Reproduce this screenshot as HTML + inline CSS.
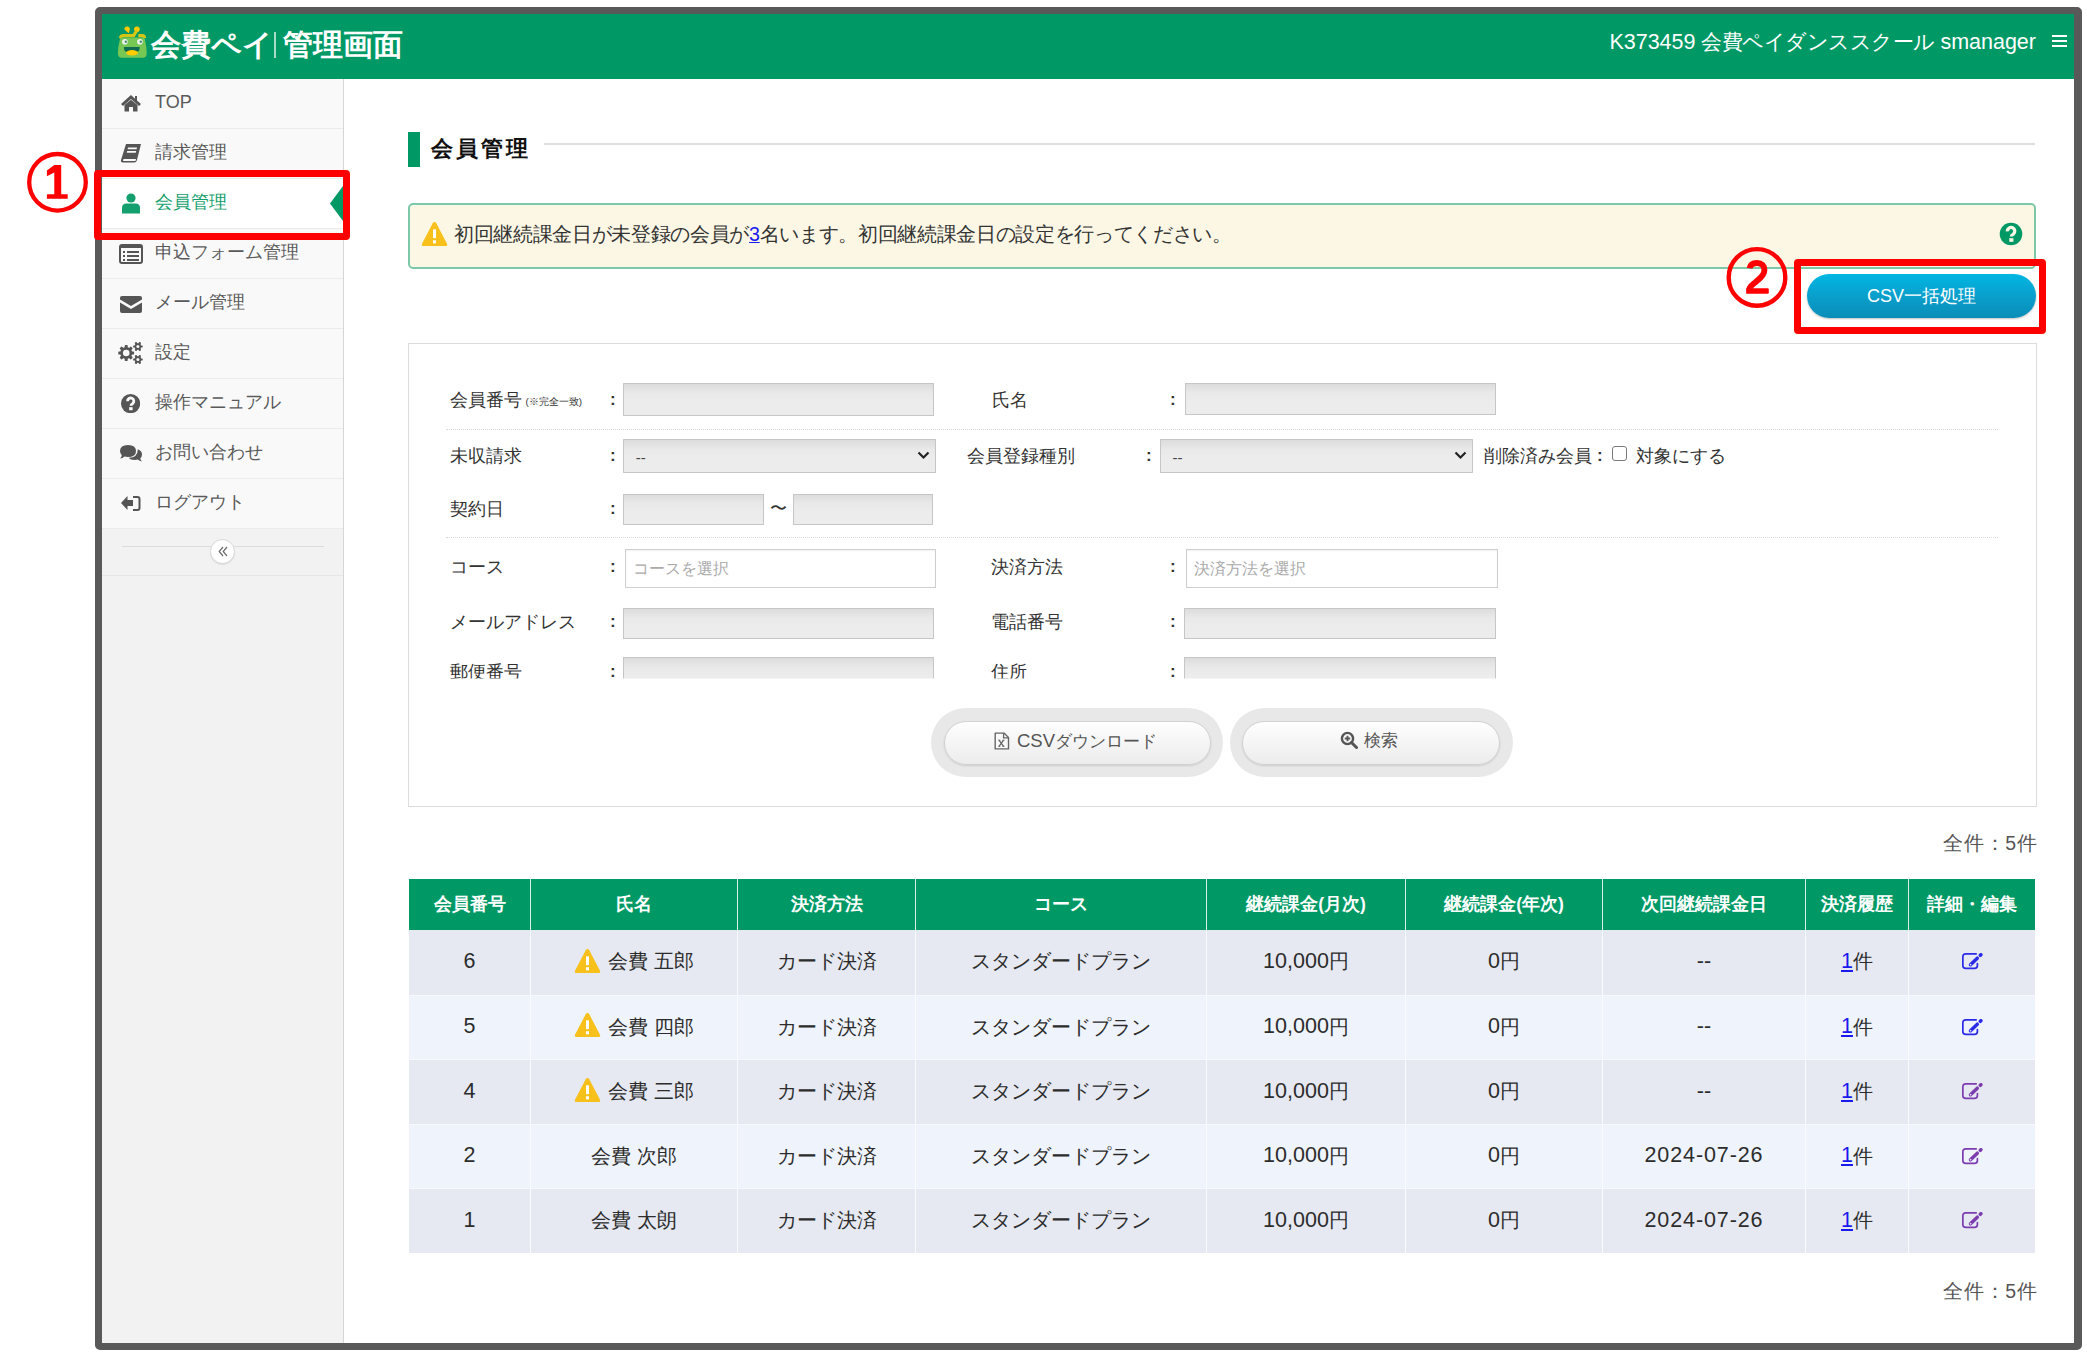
<!DOCTYPE html>
<html><head><meta charset="utf-8">
<style>
*{box-sizing:border-box;margin:0;padding:0}
html,body{width:2087px;height:1362px;overflow:hidden;background:#fff}
body{font-family:"Liberation Sans",sans-serif;color:#333;position:relative}
.a{position:absolute}
.frame{left:95px;top:7px;width:1987px;height:1343px;border:7px solid #595959;border-right-width:8px;border-radius:5px;overflow:hidden;background:#fff}
.hdr{left:0;top:0;width:1973px;height:65.4px;background:#009966}
.side{left:0;top:65px;width:242px;height:1270px;background:#f2f2f2;border-right:1px solid #d6d6d6}
.item{left:0;width:241px;height:50px;background:#f9f9f9;border-bottom:1px solid #ebebeb}
.item .t{position:absolute;left:53px;top:11px;font-size:18px;color:#5a5a5a;white-space:nowrap;line-height:24px}
.item svg{position:absolute}

.inp{position:absolute;height:33px;background:linear-gradient(#dcdcdc,#e9e9e9 30%,#ececec 60%);border:1px solid #c6c6c6}
.lbl{position:absolute;font-size:17.5px;color:#333;white-space:nowrap;line-height:22px}
.col{position:absolute;font-size:17px;color:#333;line-height:22px}
.sel .v{position:absolute;left:12px;top:8px;font-size:15px;color:#444;line-height:20px}
.sel svg{position:absolute;right:5px;top:11px}
.pill-o{position:absolute;height:69px;border-radius:35px;background:#e8e8e8}
.pill-i{position:absolute;left:13px;top:13px;height:44px;border-radius:22px;background:linear-gradient(#fefefe,#ececec);border:1px solid #d2d2d2;box-shadow:0 1px 2px rgba(0,0,0,.12);font-size:17px;color:#555;text-align:center;line-height:38px;white-space:nowrap;padding-right:4px}
.tbl{position:absolute;left:306px;top:865px;width:1627px}
.th{position:absolute;top:0;height:51px;background:#009966;color:#fff;font-weight:bold;font-size:17.5px;text-align:center;line-height:51px;white-space:nowrap;border-right:1px solid #d8efe5}
.td{position:absolute;height:65px;text-align:center;line-height:63px;font-size:19.5px;color:#2c2c2c;white-space:nowrap;border-right:1px solid #fafbfd;border-top:1px solid #f6f8fc}
.r1{background:#e6e9f1}.r2{background:#eff3fb}
.lnk{color:#1a1aee;text-decoration:underline}
.n{font-size:21.5px;position:relative;top:-0.5px}
</style></head><body>
<div class="a frame">
  <div class="a hdr">
    <svg class="a" style="left:8px;top:6px" width="50" height="45" viewBox="0 0 50 45">
      <path d="M14.3 9.3 A2.8 2.8 0 1 1 19.6 10.5 L18.6 13.2 Z" fill="#ffcc00"/>
      <circle cx="26.9" cy="9.3" r="2.8" fill="#ffcc00"/>
      <path d="M10.6 18.2 Q10.6 15.6 13.6 15.6 L23.6 15.6 L26.8 10.5" stroke="#d6c614" stroke-width="3.2" fill="none"/>
      <path d="M28.3 15.6 L32 15.6 Q34.5 15.6 34.5 18" stroke="#d6c614" stroke-width="3.2" fill="none"/>
      <path d="M11.5 17.5 L33.5 17.5 Q34.8 17.5 35 20 Q36.7 27 36.7 33 Q36.7 37.8 33 37.8 L11.5 37.8 Q7.9 37.8 7.9 33 Q7.9 27 9.8 20 Q10.2 17.5 11.5 17.5Z" fill="#76c754"/>
      <circle cx="14.9" cy="21.7" r="2.8" fill="#eef5ee"/><circle cx="15.8" cy="21.7" r="1.2" fill="#4a8a7a"/>
      <circle cx="29.9" cy="21.7" r="2.8" fill="#eef5ee"/><circle cx="30.8" cy="21.7" r="1.2" fill="#4a8a7a"/>
      <path d="M13.9 27.1 L29.7 27.1 Q29.7 31.5 27 32 L16.6 32 Q13.9 31.5 13.9 27.1Z" fill="#0d6b52"/>
      <ellipse cx="22.1" cy="32.8" rx="6" ry="2.7" fill="#ffcc00"/>
    </svg>
    <div class="a" style="left:49px;top:13px;font-size:29.5px;font-weight:bold;color:#fff;white-space:nowrap;line-height:36px">会費ペイ<span style="display:inline-block;width:2px;height:26px;background:#a9dcc6;margin:0 7px 0 1px;vertical-align:-3px"></span>管理画面</div>
    <div class="a" style="right:39px;top:12.5px;font-size:21.5px;color:#fff;white-space:nowrap;line-height:30px">K373459 <span style="font-size:20.9px;letter-spacing:-0.55px">会費ペイダンススクール</span> smanager</div>
    <div class="a" style="left:1949.5px;top:20.5px;width:15px;height:13px">
      <div class="a" style="left:0;top:0;width:15px;height:2px;background:#fff"></div>
      <div class="a" style="left:0;top:5px;width:15px;height:2px;background:#fff"></div>
      <div class="a" style="left:0;top:10px;width:15px;height:2px;background:#fff"></div>
    </div>
  </div>

  <div class="a side">
    <div class="a item" style="top:0"><svg style="left:18px;top:15px" width="22" height="18" viewBox="0 0 22 18"><path d="M11 1 L1 10 L3 12 L11 5 L19 12 L21 10 L17 6.5 L17 2 L15 2 L15 4.8Z" fill="#555"/><path d="M4.5 11 L11 5.8 L17.5 11 L17.5 17.5 L13 17.5 L13 13 L9 13 L9 17.5 L4.5 17.5Z" fill="#555"/></svg><div class="t" style="font-size:18px">TOP</div></div>
    <div class="a item" style="top:50px"><svg style="left:18px;top:14px" width="22" height="21" viewBox="0 0 22 21"><path d="M6 1 L21 1 L17 17 Q16.5 19.5 14 19.5 L3 19.5 Q0.5 19.5 1 17 Z" fill="#555"/><path d="M3.5 16 L16 16 L15.5 18 L3 18Z" fill="#f9f9f9"/><path d="M8 4.5 L17 4.5 L16.6 6.3 L7.6 6.3Z M7.2 8 L16.2 8 L15.8 9.8 L6.8 9.8Z" fill="#f9f9f9"/></svg><div class="t">請求管理</div></div>
    <div class="a item" style="top:100px;background:#fff"><svg style="left:19px;top:14px" width="20" height="21" viewBox="0 0 20 21"><circle cx="10" cy="5" r="4.6" fill="#14a06e"/><path d="M1 20.5 L1 15 Q1 10.5 5.5 10.5 L14.5 10.5 Q19 10.5 19 15 L19 20.5Z" fill="#14a06e"/></svg><div class="t" style="color:#14a06e">会員管理</div>
      <svg style="left:228px;top:7px" width="13" height="35" viewBox="0 0 13 35"><path d="M13 0 L0 17.5 L13 35Z" fill="#009966"/></svg></div>
    <div class="a item" style="top:150px"><svg style="left:17px;top:15px" width="24" height="20" viewBox="0 0 24 20"><rect x="1" y="1" width="22" height="18" rx="2" fill="none" stroke="#555" stroke-width="2"/><rect x="1" y="1" width="22" height="3" fill="#555"/><rect x="4" y="7" width="2" height="2" fill="#555"/><rect x="8" y="7" width="12" height="2" fill="#555"/><rect x="4" y="11" width="2" height="2" fill="#555"/><rect x="8" y="11" width="12" height="2" fill="#555"/><rect x="4" y="15" width="2" height="2" fill="#555"/><rect x="8" y="15" width="12" height="2" fill="#555"/></svg><div class="t">申込フォーム管理</div></div>
    <div class="a item" style="top:200px"><svg style="left:17px;top:16px" width="24" height="19" viewBox="0 0 24 19"><path d="M1 3 Q1 1 3 1 L21 1 Q23 1 23 3 L23 4.5 L12 11 L1 4.5Z" fill="#555"/><path d="M1 7.5 L12 14 L23 7.5 L23 16 Q23 18 21 18 L3 18 Q1 18 1 16Z" fill="#555"/></svg><div class="t">メール管理</div></div>
    <div class="a item" style="top:250px"><svg style="left:10px;top:7px" width="40" height="34" viewBox="0 0 40 34"><circle cx="14.2" cy="17" r="6.0" fill="#555"/><rect x="12.7" y="9.1" width="3.0" height="7.9" rx="0.6" fill="#555" transform="rotate(0.0 14.2 17)"/><rect x="12.7" y="9.1" width="3.0" height="7.9" rx="0.6" fill="#555" transform="rotate(45.0 14.2 17)"/><rect x="12.7" y="9.1" width="3.0" height="7.9" rx="0.6" fill="#555" transform="rotate(90.0 14.2 17)"/><rect x="12.7" y="9.1" width="3.0" height="7.9" rx="0.6" fill="#555" transform="rotate(135.0 14.2 17)"/><rect x="12.7" y="9.1" width="3.0" height="7.9" rx="0.6" fill="#555" transform="rotate(180.0 14.2 17)"/><rect x="12.7" y="9.1" width="3.0" height="7.9" rx="0.6" fill="#555" transform="rotate(225.0 14.2 17)"/><rect x="12.7" y="9.1" width="3.0" height="7.9" rx="0.6" fill="#555" transform="rotate(270.0 14.2 17)"/><rect x="12.7" y="9.1" width="3.0" height="7.9" rx="0.6" fill="#555" transform="rotate(315.0 14.2 17)"/><circle cx="14.2" cy="17" r="3.3" fill="#f9f9f9"/><circle cx="25.9" cy="10.5" r="3.2" fill="#555"/><rect x="24.849999999999998" y="5.7" width="2.1" height="4.8" rx="0.6" fill="#555" transform="rotate(30.0 25.9 10.5)"/><rect x="24.849999999999998" y="5.7" width="2.1" height="4.8" rx="0.6" fill="#555" transform="rotate(90.0 25.9 10.5)"/><rect x="24.849999999999998" y="5.7" width="2.1" height="4.8" rx="0.6" fill="#555" transform="rotate(150.0 25.9 10.5)"/><rect x="24.849999999999998" y="5.7" width="2.1" height="4.8" rx="0.6" fill="#555" transform="rotate(210.0 25.9 10.5)"/><rect x="24.849999999999998" y="5.7" width="2.1" height="4.8" rx="0.6" fill="#555" transform="rotate(270.0 25.9 10.5)"/><rect x="24.849999999999998" y="5.7" width="2.1" height="4.8" rx="0.6" fill="#555" transform="rotate(330.0 25.9 10.5)"/><circle cx="25.9" cy="10.5" r="1.5" fill="#f9f9f9"/><circle cx="25.9" cy="23.5" r="3.2" fill="#555"/><rect x="24.849999999999998" y="18.7" width="2.1" height="4.8" rx="0.6" fill="#555" transform="rotate(30.0 25.9 23.5)"/><rect x="24.849999999999998" y="18.7" width="2.1" height="4.8" rx="0.6" fill="#555" transform="rotate(90.0 25.9 23.5)"/><rect x="24.849999999999998" y="18.7" width="2.1" height="4.8" rx="0.6" fill="#555" transform="rotate(150.0 25.9 23.5)"/><rect x="24.849999999999998" y="18.7" width="2.1" height="4.8" rx="0.6" fill="#555" transform="rotate(210.0 25.9 23.5)"/><rect x="24.849999999999998" y="18.7" width="2.1" height="4.8" rx="0.6" fill="#555" transform="rotate(270.0 25.9 23.5)"/><rect x="24.849999999999998" y="18.7" width="2.1" height="4.8" rx="0.6" fill="#555" transform="rotate(330.0 25.9 23.5)"/><circle cx="25.9" cy="23.5" r="1.5" fill="#f9f9f9"/></svg><div class="t">設定</div></div>
    <div class="a item" style="top:300px"><svg style="left:18.7px;top:14.9px" width="19.2" height="19.2" viewBox="0.7 0.7 22.6 22.6"><circle cx="12" cy="12" r="11.3" fill="#555"/><path d="M8.4 9.3 A3.7 3.7 0 1 1 14.3 12.1 Q12.4 13.1 12.4 14.6" fill="none" stroke="#f9f9f9" stroke-width="3.3"/><rect x="10.3" y="16.2" width="4.1" height="3.6" fill="#f9f9f9"/></svg><div class="t">操作マニュアル</div></div>
    <div class="a item" style="top:350px"><svg style="left:17px;top:15px" width="24" height="20" viewBox="0 0 24 20"><path d="M9 1 Q17 1 17 7 Q17 13 9 13 Q7 13 5.5 12.6 Q3.5 14.6 1 14.6 Q2.6 13 2.8 11.3 Q1 9.6 1 7 Q1 1 9 1Z" fill="#555"/><path d="M18.8 5.2 Q23 6.8 23 10.4 Q23 12.7 21.3 14.3 Q21.5 16 23 17.4 Q20.6 17.4 18.7 15.6 Q17.4 16 16 16 Q11.2 16 9.8 13.8 Q18.8 13.6 18.8 5.2Z" fill="#555"/></svg><div class="t">お問い合わせ</div></div>
    <div class="a item" style="top:400px"><svg style="left:18px;top:15px" width="22" height="19" viewBox="0 0 22 19"><path d="M1 9 L7.5 2 L7.5 6 L13 6 L13 12 L7.5 12 L7.5 16Z" fill="#555"/><path d="M13 2 L17.5 2 Q20.5 2 20.5 5 L20.5 14 Q20.5 17 17.5 17 L13 17 L13 15 L17.5 15 Q18.5 15 18.5 14 L18.5 5 Q18.5 4 17.5 4 L13 4Z" fill="#555"/></svg><div class="t">ログアウト</div></div>
    <div class="a" style="left:0;top:450px;width:241px;height:47px;background:#f2f2f2;border-bottom:1px solid #e6e6e6">
      <div class="a" style="left:20px;top:17px;width:202px;height:1px;background:#dcdcdc"></div>
      <div class="a" style="left:108px;top:10px;width:25px;height:25px;border-radius:50%;background:#fff;border:1px solid #d8d8d8;box-shadow:0 1px 1px rgba(0,0,0,.08)"><svg class="a" style="left:7px;top:6px" width="10" height="11" viewBox="0 0 10 11"><path d="M5 1 L1.2 5.5 L5 10 M9 1 L5.2 5.5 L9 10" fill="none" stroke="#6a6a6a" stroke-width="1.2"/></svg></div>
    </div>
  </div>

  <!-- main -->
  <div class="a" style="left:306px;top:118px;width:12px;height:35px;background:#009966"></div>
  <div class="a" style="left:329px;top:120px;font-size:22px;font-weight:bold;letter-spacing:3px;color:#111;line-height:30px;white-space:nowrap">会員管理</div>
  <div class="a" style="left:442px;top:129px;width:1491px;height:2px;background:#dedede"></div>

  <div class="a" style="left:305.5px;top:188.5px;width:1628.5px;height:66px;background:#fcf7e5;border:2px solid #7cc9a9;border-radius:5px"></div>
  <svg class="a" style="left:319px;top:206.5px" width="27" height="26" viewBox="0 0 27 25" preserveAspectRatio="none"><path d="M13.5 1 Q14.6 1 15.3 2.2 L26 21.8 Q26.8 24 24.5 24 L2.5 24 Q0.2 24 1 21.8 L11.7 2.2 Q12.4 1 13.5 1Z" fill="#f7c01b"/><rect x="12" y="8" width="3" height="8.5" fill="#fff"/><rect x="12" y="18.5" width="3" height="3" fill="#fff"/></svg>
  <div class="a" style="left:352px;top:207px;font-size:19.7px;letter-spacing:-0.33px;color:#333;line-height:27px;white-space:nowrap">初回継続課金日が未登録の会員が<span class="lnk">3</span>名います。初回継続課金日の設定を行ってください。</div>
  <svg class="a" style="left:1897.2px;top:208.2px" width="24" height="24" viewBox="0 0 24 24"><circle cx="12" cy="12" r="11.3" fill="#009966"/><path d="M8.4 9.3 A3.7 3.7 0 1 1 14.3 12.1 Q12.4 13.1 12.4 14.6" fill="none" stroke="#fdf8e6" stroke-width="3.3"/><rect x="10.3" y="16.2" width="4.1" height="3.6" fill="#fdf8e6"/></svg>

  <div class="a" style="left:1705px;top:260px;width:229px;height:44px;border-radius:22px;background:linear-gradient(#00b7e3,#0a9fcc 50%,#0a8db8);box-shadow:0 1px 2px rgba(0,0,0,.25);color:#fff;font-size:18px;text-align:center;line-height:44px;white-space:nowrap">CSV一括処理</div>

  <!-- form panel -->
  <div class="a" style="left:306px;top:329px;width:1629px;height:464px;border:1px solid #dcdcdc;background:#fff"></div>
  <div class="a" style="left:0;top:0;width:1973px;height:1329px;clip-path:inset(330px 0 664.5px 0)">
<div class="lbl" style="left:347.6px;top:374.7px;font-size:17.5px">会員番号<span style="font-size:9.8px;margin-left:4px;vertical-align:1px">(※完全一致)</span></div>
<div class="lbl" style="left:508px;top:375px;font-size:17px;font-weight:bold">:</div>
<div class="inp" style="left:520.7px;top:369px;width:311.3px;height:33px;"></div>
<div class="lbl" style="left:889.7px;top:374.7px;font-size:17.5px">氏名</div>
<div class="lbl" style="left:1068px;top:375px;font-size:17px;font-weight:bold">:</div>
<div class="inp" style="left:1082.5px;top:369px;width:311.3px;height:32px;"></div>
<div class="a" style="left:343.6px;top:415px;width:1552px;height:0;border-top:1px dotted #dadada"></div>
<div class="lbl" style="left:347.6px;top:430.7px;font-size:17.5px">未収請求</div>
<div class="lbl" style="left:508px;top:431px;font-size:17px;font-weight:bold">:</div>
<div class="inp sel" style="left:520.7px;top:424.7px;width:313px;height:34px"><div class="v">--</div><svg width="13" height="9" viewBox="0 0 13 9"><path d="M1.5 1.5 L6.5 6.5 L11.5 1.5" stroke="#222" stroke-width="2.2" fill="none"/></svg></div>
<div class="lbl" style="left:864.8px;top:430.7px;font-size:17.5px">会員登録種別</div>
<div class="lbl" style="left:1044px;top:431px;font-size:17px;font-weight:bold">:</div>
<div class="inp sel" style="left:1057.6px;top:424.5px;width:313px;height:34px"><div class="v">--</div><svg width="13" height="9" viewBox="0 0 13 9"><path d="M1.5 1.5 L6.5 6.5 L11.5 1.5" stroke="#222" stroke-width="2.2" fill="none"/></svg></div>
<div class="lbl" style="left:1382.3px;top:430.7px;font-size:17.5px">削除済み会員</div><div class="lbl" style="left:1495px;top:431px;font-size:17px;font-weight:bold">:</div><div class="a" style="left:1510px;top:432px;width:15px;height:15px;border:1.5px solid #7a7a7a;border-radius:3px;background:#fff"></div><div class="lbl" style="left:1534px;top:430.7px;font-size:17.5px">対象にする</div>
<div class="lbl" style="left:347.6px;top:484px;font-size:17.5px">契約日</div>
<div class="lbl" style="left:508px;top:484px;font-size:17px;font-weight:bold">:</div>
<div class="inp" style="left:520.7px;top:479.7px;width:141px;height:31.6px;"></div>
<div class="lbl" style="left:668px;top:484px;font-size:17px">〜</div>
<div class="inp" style="left:691px;top:479.7px;width:140px;height:31.6px;"></div>
<div class="a" style="left:343.6px;top:523px;width:1552px;height:0;border-top:1px dotted #dadada"></div>
<div class="lbl" style="left:347.6px;top:542px;font-size:17.5px">コース</div>
<div class="lbl" style="left:508px;top:542px;font-size:17px;font-weight:bold">:</div>
<div class="inp" style="left:523.4px;top:535px;width:311px;height:39.4px;background:#fff;border-color:#cfcfcf;box-shadow:inset 0 1px 2px rgba(0,0,0,.06)"><div class="a" style="left:7px;top:8px;font-size:16px;color:#aaa;line-height:22px;white-space:nowrap;font-family:'Liberation Serif',serif">コースを選択</div></div>
<div class="lbl" style="left:889.2px;top:541.7px;font-size:17.5px">決済方法</div>
<div class="lbl" style="left:1068px;top:542px;font-size:17px;font-weight:bold">:</div>
<div class="inp" style="left:1083.8px;top:535.3px;width:312.6px;height:39.1px;background:#fff;border-color:#cfcfcf;box-shadow:inset 0 1px 2px rgba(0,0,0,.06)"><div class="a" style="left:7px;top:8px;font-size:16px;color:#aaa;line-height:22px;white-space:nowrap;font-family:'Liberation Serif',serif">決済方法を選択</div></div>
<div class="lbl" style="left:347.6px;top:597px;font-size:17.5px">メールアドレス</div>
<div class="lbl" style="left:508px;top:597px;font-size:17px;font-weight:bold">:</div>
<div class="inp" style="left:520.7px;top:593.7px;width:311.3px;height:31.7px;"></div>
<div class="lbl" style="left:889.2px;top:597.4px;font-size:17.5px">電話番号</div>
<div class="lbl" style="left:1068px;top:597px;font-size:17px;font-weight:bold">:</div>
<div class="inp" style="left:1082.4px;top:593.6px;width:311.4px;height:31.7px;"></div>
<div class="lbl" style="left:347.6px;top:646.5px;font-size:17.5px">郵便番号</div>
<div class="lbl" style="left:508px;top:647px;font-size:17px;font-weight:bold">:</div>
<div class="inp" style="left:520.7px;top:642.8px;width:311.3px;height:33px;"></div>
<div class="lbl" style="left:889.2px;top:646.5px;font-size:17.5px">住所</div>
<div class="lbl" style="left:1068px;top:647px;font-size:17px;font-weight:bold">:</div>
<div class="inp" style="left:1082.4px;top:642.5px;width:311.4px;height:33px;"></div>
  </div>
<div class="pill-o" style="left:829px;top:693.5px;width:292.4px"><div class="pill-i" style="width:267px"><svg width="16" height="18" viewBox="0 0 16 18" style="vertical-align:-3px;margin-right:7px"><path d="M1.2 1.1 L10 1.1 L14.5 5.6 L14.5 16.9 L1.2 16.9Z" fill="#fafafa" stroke="#666" stroke-width="1.4" stroke-linejoin="round"/><path d="M9.6 1.1 L9.6 5.9 L14.5 5.9" fill="none" stroke="#666" stroke-width="1.3"/><path d="M5 8.2 L9.6 14.4 M9.6 8.2 L5 14.4" stroke="#666" stroke-width="1.3"/><path d="M4.2 8.2 L6.3 8.2 M8.4 8.2 L10.5 8.2 M4.2 14.4 L6.3 14.4 M8.4 14.4 L10.5 14.4" stroke="#666" stroke-width="0.9"/></svg><span style="font-size:18.5px">CSV</span>ダウンロード</div></div>
<div class="pill-o" style="left:1127.8px;top:694px;width:283px"><div class="pill-i" style="left:12.2px;width:258px"><svg width="18" height="18" viewBox="0 0 18 18" style="vertical-align:-3px;margin-right:6px"><circle cx="7.5" cy="7.5" r="5.6" fill="none" stroke="#555" stroke-width="2.4"/><path d="M11.5 11.5 L16.5 16.5" stroke="#555" stroke-width="3" stroke-linecap="round"/><path d="M7.5 4.8 L7.5 10.2 M4.8 7.5 L10.2 7.5" stroke="#555" stroke-width="1.8"/></svg>検索</div></div>
<div class="a" style="right:37px;top:816px;font-size:19.5px;letter-spacing:0.8px;margin-right:-0.8px;color:#555;line-height:26px;white-space:nowrap">全件：5件</div>
<div class="a" style="right:37px;top:1263.5px;font-size:19.5px;letter-spacing:0.8px;margin-right:-0.8px;color:#555;line-height:26px;white-space:nowrap">全件：5件</div>
<div class="th" style="left:307px;top:865.2px;width:122px;">会員番号</div>
<div class="th" style="left:429px;top:865.2px;width:207px;">氏名</div>
<div class="th" style="left:636px;top:865.2px;width:178px;">決済方法</div>
<div class="th" style="left:814px;top:865.2px;width:291px;">コース</div>
<div class="th" style="left:1105px;top:865.2px;width:199px;">継続課金(月次)</div>
<div class="th" style="left:1304px;top:865.2px;width:197px;">継続課金(年次)</div>
<div class="th" style="left:1501px;top:865.2px;width:203px;">次回継続課金日</div>
<div class="th" style="left:1704px;top:865.2px;width:103px;">決済履歴</div>
<div class="th" style="left:1807px;top:865.2px;width:126px;border-right:none;">詳細・編集</div>
<div class="td r1" style="left:307px;top:916.0px;width:122px;border-top:none;"><span class="n">6</span></div>
<div class="td r1" style="left:429px;top:916.0px;width:207px;border-top:none;"><span style="display:inline-block;width:27px;height:25px;vertical-align:-4px;margin-right:7px;position:relative"></span>会費 五郎</div>
<div class="td r1" style="left:636px;top:916.0px;width:178px;border-top:none;">カード決済</div>
<div class="td r1" style="left:814px;top:916.0px;width:291px;border-top:none;">スタンダードプラン</div>
<div class="td r1" style="left:1105px;top:916.0px;width:199px;border-top:none;"><span class="n">10,000</span>円</div>
<div class="td r1" style="left:1304px;top:916.0px;width:197px;border-top:none;"><span class="n">0</span>円</div>
<div class="td r1" style="left:1501px;top:916.0px;width:203px;border-top:none;"><span class="n">--</span></div>
<div class="td r1" style="left:1704px;top:916.0px;width:103px;border-top:none;"><span class="lnk n">1</span>件</div>
<div class="td r1" style="left:1807px;top:916.0px;width:126px;border-right:none;border-top:none;"><svg width="22" height="18" viewBox="0 0 22 18" style="vertical-align:-3px;margin-left:1px"><path d="M14.2 0.85 L3.8 0.85 Q0.85 0.85 0.85 3.8 L0.85 12.5 Q0.85 15.4 3.8 15.4 L12.5 15.4 Q15.4 15.4 15.4 12.5 L15.4 10.6" fill="none" stroke="#2a2ae8" stroke-width="1.7" stroke-linecap="round"/><path d="M8.5 11.7 L15.3 5.2" stroke="#2a2ae8" stroke-width="3.5" stroke-linecap="round"/><path d="M18.3 2.3 L18.9 1.7" stroke="#2a2ae8" stroke-width="3.5" stroke-linecap="round"/><rect x="7.9" y="11" width="1.5" height="1.5" fill="#e6e9f1" transform="rotate(44 8.65 11.75)"/></svg></div>
<svg class="a" style="left:471.5px;top:933.5px" width="27" height="26" viewBox="0 0 27 25" preserveAspectRatio="none"><path d="M13.5 1 Q14.6 1 15.3 2.2 L26 21.8 Q26.8 24 24.5 24 L2.5 24 Q0.2 24 1 21.8 L11.7 2.2 Q12.4 1 13.5 1Z" fill="#f7c01b"/><rect x="12" y="8" width="3" height="8.5" fill="#fff"/><rect x="12" y="18.5" width="3" height="3" fill="#fff"/></svg>
<div class="td r2" style="left:307px;top:980.6px;width:122px;"><span class="n">5</span></div>
<div class="td r2" style="left:429px;top:980.6px;width:207px;"><span style="display:inline-block;width:27px;height:25px;vertical-align:-4px;margin-right:7px;position:relative"></span>会費 四郎</div>
<div class="td r2" style="left:636px;top:980.6px;width:178px;">カード決済</div>
<div class="td r2" style="left:814px;top:980.6px;width:291px;">スタンダードプラン</div>
<div class="td r2" style="left:1105px;top:980.6px;width:199px;"><span class="n">10,000</span>円</div>
<div class="td r2" style="left:1304px;top:980.6px;width:197px;"><span class="n">0</span>円</div>
<div class="td r2" style="left:1501px;top:980.6px;width:203px;"><span class="n">--</span></div>
<div class="td r2" style="left:1704px;top:980.6px;width:103px;"><span class="lnk n">1</span>件</div>
<div class="td r2" style="left:1807px;top:980.6px;width:126px;border-right:none;"><svg width="22" height="18" viewBox="0 0 22 18" style="vertical-align:-3px;margin-left:1px"><path d="M14.2 0.85 L3.8 0.85 Q0.85 0.85 0.85 3.8 L0.85 12.5 Q0.85 15.4 3.8 15.4 L12.5 15.4 Q15.4 15.4 15.4 12.5 L15.4 10.6" fill="none" stroke="#2a2ae8" stroke-width="1.7" stroke-linecap="round"/><path d="M8.5 11.7 L15.3 5.2" stroke="#2a2ae8" stroke-width="3.5" stroke-linecap="round"/><path d="M18.3 2.3 L18.9 1.7" stroke="#2a2ae8" stroke-width="3.5" stroke-linecap="round"/><rect x="7.9" y="11" width="1.5" height="1.5" fill="#e6e9f1" transform="rotate(44 8.65 11.75)"/></svg></div>
<svg class="a" style="left:471.5px;top:998.1px" width="27" height="26" viewBox="0 0 27 25" preserveAspectRatio="none"><path d="M13.5 1 Q14.6 1 15.3 2.2 L26 21.8 Q26.8 24 24.5 24 L2.5 24 Q0.2 24 1 21.8 L11.7 2.2 Q12.4 1 13.5 1Z" fill="#f7c01b"/><rect x="12" y="8" width="3" height="8.5" fill="#fff"/><rect x="12" y="18.5" width="3" height="3" fill="#fff"/></svg>
<div class="td r1" style="left:307px;top:1045.2px;width:122px;"><span class="n">4</span></div>
<div class="td r1" style="left:429px;top:1045.2px;width:207px;"><span style="display:inline-block;width:27px;height:25px;vertical-align:-4px;margin-right:7px;position:relative"></span>会費 三郎</div>
<div class="td r1" style="left:636px;top:1045.2px;width:178px;">カード決済</div>
<div class="td r1" style="left:814px;top:1045.2px;width:291px;">スタンダードプラン</div>
<div class="td r1" style="left:1105px;top:1045.2px;width:199px;"><span class="n">10,000</span>円</div>
<div class="td r1" style="left:1304px;top:1045.2px;width:197px;"><span class="n">0</span>円</div>
<div class="td r1" style="left:1501px;top:1045.2px;width:203px;"><span class="n">--</span></div>
<div class="td r1" style="left:1704px;top:1045.2px;width:103px;"><span class="lnk n">1</span>件</div>
<div class="td r1" style="left:1807px;top:1045.2px;width:126px;border-right:none;"><svg width="22" height="18" viewBox="0 0 22 18" style="vertical-align:-3px;margin-left:1px"><path d="M14.2 0.85 L3.8 0.85 Q0.85 0.85 0.85 3.8 L0.85 12.5 Q0.85 15.4 3.8 15.4 L12.5 15.4 Q15.4 15.4 15.4 12.5 L15.4 10.6" fill="none" stroke="#7d3db0" stroke-width="1.7" stroke-linecap="round"/><path d="M8.5 11.7 L15.3 5.2" stroke="#7d3db0" stroke-width="3.5" stroke-linecap="round"/><path d="M18.3 2.3 L18.9 1.7" stroke="#7d3db0" stroke-width="3.5" stroke-linecap="round"/><rect x="7.9" y="11" width="1.5" height="1.5" fill="#e6e9f1" transform="rotate(44 8.65 11.75)"/></svg></div>
<svg class="a" style="left:471.5px;top:1062.7px" width="27" height="26" viewBox="0 0 27 25" preserveAspectRatio="none"><path d="M13.5 1 Q14.6 1 15.3 2.2 L26 21.8 Q26.8 24 24.5 24 L2.5 24 Q0.2 24 1 21.8 L11.7 2.2 Q12.4 1 13.5 1Z" fill="#f7c01b"/><rect x="12" y="8" width="3" height="8.5" fill="#fff"/><rect x="12" y="18.5" width="3" height="3" fill="#fff"/></svg>
<div class="td r2" style="left:307px;top:1109.8px;width:122px;"><span class="n">2</span></div>
<div class="td r2" style="left:429px;top:1109.8px;width:207px;">会費 次郎</div>
<div class="td r2" style="left:636px;top:1109.8px;width:178px;">カード決済</div>
<div class="td r2" style="left:814px;top:1109.8px;width:291px;">スタンダードプラン</div>
<div class="td r2" style="left:1105px;top:1109.8px;width:199px;"><span class="n">10,000</span>円</div>
<div class="td r2" style="left:1304px;top:1109.8px;width:197px;"><span class="n">0</span>円</div>
<div class="td r2" style="left:1501px;top:1109.8px;width:203px;"><span class="n" style="letter-spacing:0.9px">2024-07-26</span></div>
<div class="td r2" style="left:1704px;top:1109.8px;width:103px;"><span class="lnk n">1</span>件</div>
<div class="td r2" style="left:1807px;top:1109.8px;width:126px;border-right:none;"><svg width="22" height="18" viewBox="0 0 22 18" style="vertical-align:-3px;margin-left:1px"><path d="M14.2 0.85 L3.8 0.85 Q0.85 0.85 0.85 3.8 L0.85 12.5 Q0.85 15.4 3.8 15.4 L12.5 15.4 Q15.4 15.4 15.4 12.5 L15.4 10.6" fill="none" stroke="#7d3db0" stroke-width="1.7" stroke-linecap="round"/><path d="M8.5 11.7 L15.3 5.2" stroke="#7d3db0" stroke-width="3.5" stroke-linecap="round"/><path d="M18.3 2.3 L18.9 1.7" stroke="#7d3db0" stroke-width="3.5" stroke-linecap="round"/><rect x="7.9" y="11" width="1.5" height="1.5" fill="#e6e9f1" transform="rotate(44 8.65 11.75)"/></svg></div>
<div class="td r1" style="left:307px;top:1174.4px;width:122px;"><span class="n">1</span></div>
<div class="td r1" style="left:429px;top:1174.4px;width:207px;">会費 太朗</div>
<div class="td r1" style="left:636px;top:1174.4px;width:178px;">カード決済</div>
<div class="td r1" style="left:814px;top:1174.4px;width:291px;">スタンダードプラン</div>
<div class="td r1" style="left:1105px;top:1174.4px;width:199px;"><span class="n">10,000</span>円</div>
<div class="td r1" style="left:1304px;top:1174.4px;width:197px;"><span class="n">0</span>円</div>
<div class="td r1" style="left:1501px;top:1174.4px;width:203px;"><span class="n" style="letter-spacing:0.9px">2024-07-26</span></div>
<div class="td r1" style="left:1704px;top:1174.4px;width:103px;"><span class="lnk n">1</span>件</div>
<div class="td r1" style="left:1807px;top:1174.4px;width:126px;border-right:none;"><svg width="22" height="18" viewBox="0 0 22 18" style="vertical-align:-3px;margin-left:1px"><path d="M14.2 0.85 L3.8 0.85 Q0.85 0.85 0.85 3.8 L0.85 12.5 Q0.85 15.4 3.8 15.4 L12.5 15.4 Q15.4 15.4 15.4 12.5 L15.4 10.6" fill="none" stroke="#7d3db0" stroke-width="1.7" stroke-linecap="round"/><path d="M8.5 11.7 L15.3 5.2" stroke="#7d3db0" stroke-width="3.5" stroke-linecap="round"/><path d="M18.3 2.3 L18.9 1.7" stroke="#7d3db0" stroke-width="3.5" stroke-linecap="round"/><rect x="7.9" y="11" width="1.5" height="1.5" fill="#e6e9f1" transform="rotate(44 8.65 11.75)"/></svg></div>
</div>

<!-- annotations -->
<div class="a" style="left:94px;top:170px;width:256px;height:70px;border:7px solid #ff0000;border-radius:4px"></div>
<div class="a" style="left:1794px;top:259px;width:252px;height:75px;border:7px solid #ff0000;border-radius:4px"></div>
<svg class="a" style="left:0;top:120px" width="100" height="120" viewBox="0 120 100 120">
  <circle cx="57.5" cy="182.3" r="28.3" fill="none" stroke="#ff0000" stroke-width="4.3"/>
  <path d="M54.3 165 L61.2 165 L61.2 194.2 L67.7 194.2 L67.7 198.8 L46.9 198.8 L46.9 194.2 L54.3 194.2 L54.3 172.6 L46.9 176.3 L46.9 170.6 Z" fill="#ff0000"/>
</svg>
<svg class="a" style="left:1700px;top:230px" width="100" height="100" viewBox="1700 230 100 100">
  <circle cx="1757" cy="277.4" r="28.3" fill="none" stroke="#ff0000" stroke-width="4.4"/>
</svg>
<svg class="a" style="left:1700px;top:230px" width="100" height="100" viewBox="1700 230 100 100"><path d="M1749.6 268.2 C1750.2 264.6 1752.6 262.95 1757 262.95 C1761.8 262.95 1764.4 265.6 1764.4 269.9 C1764.4 273.6 1762.2 276.3 1758.6 279.4 L1751.2 285.8 Q1749.2 287.8 1749.2 290.5" fill="none" stroke="#ff0000" stroke-width="5.9"/><path d="M1746.2 288.2 L1767.6 288.2 Q1768.8 288.2 1768.8 289.4 L1768.8 292.5 Q1768.8 293.7 1767.6 293.7 L1746.2 293.7 Z" fill="#ff0000"/></svg>
</body></html>
